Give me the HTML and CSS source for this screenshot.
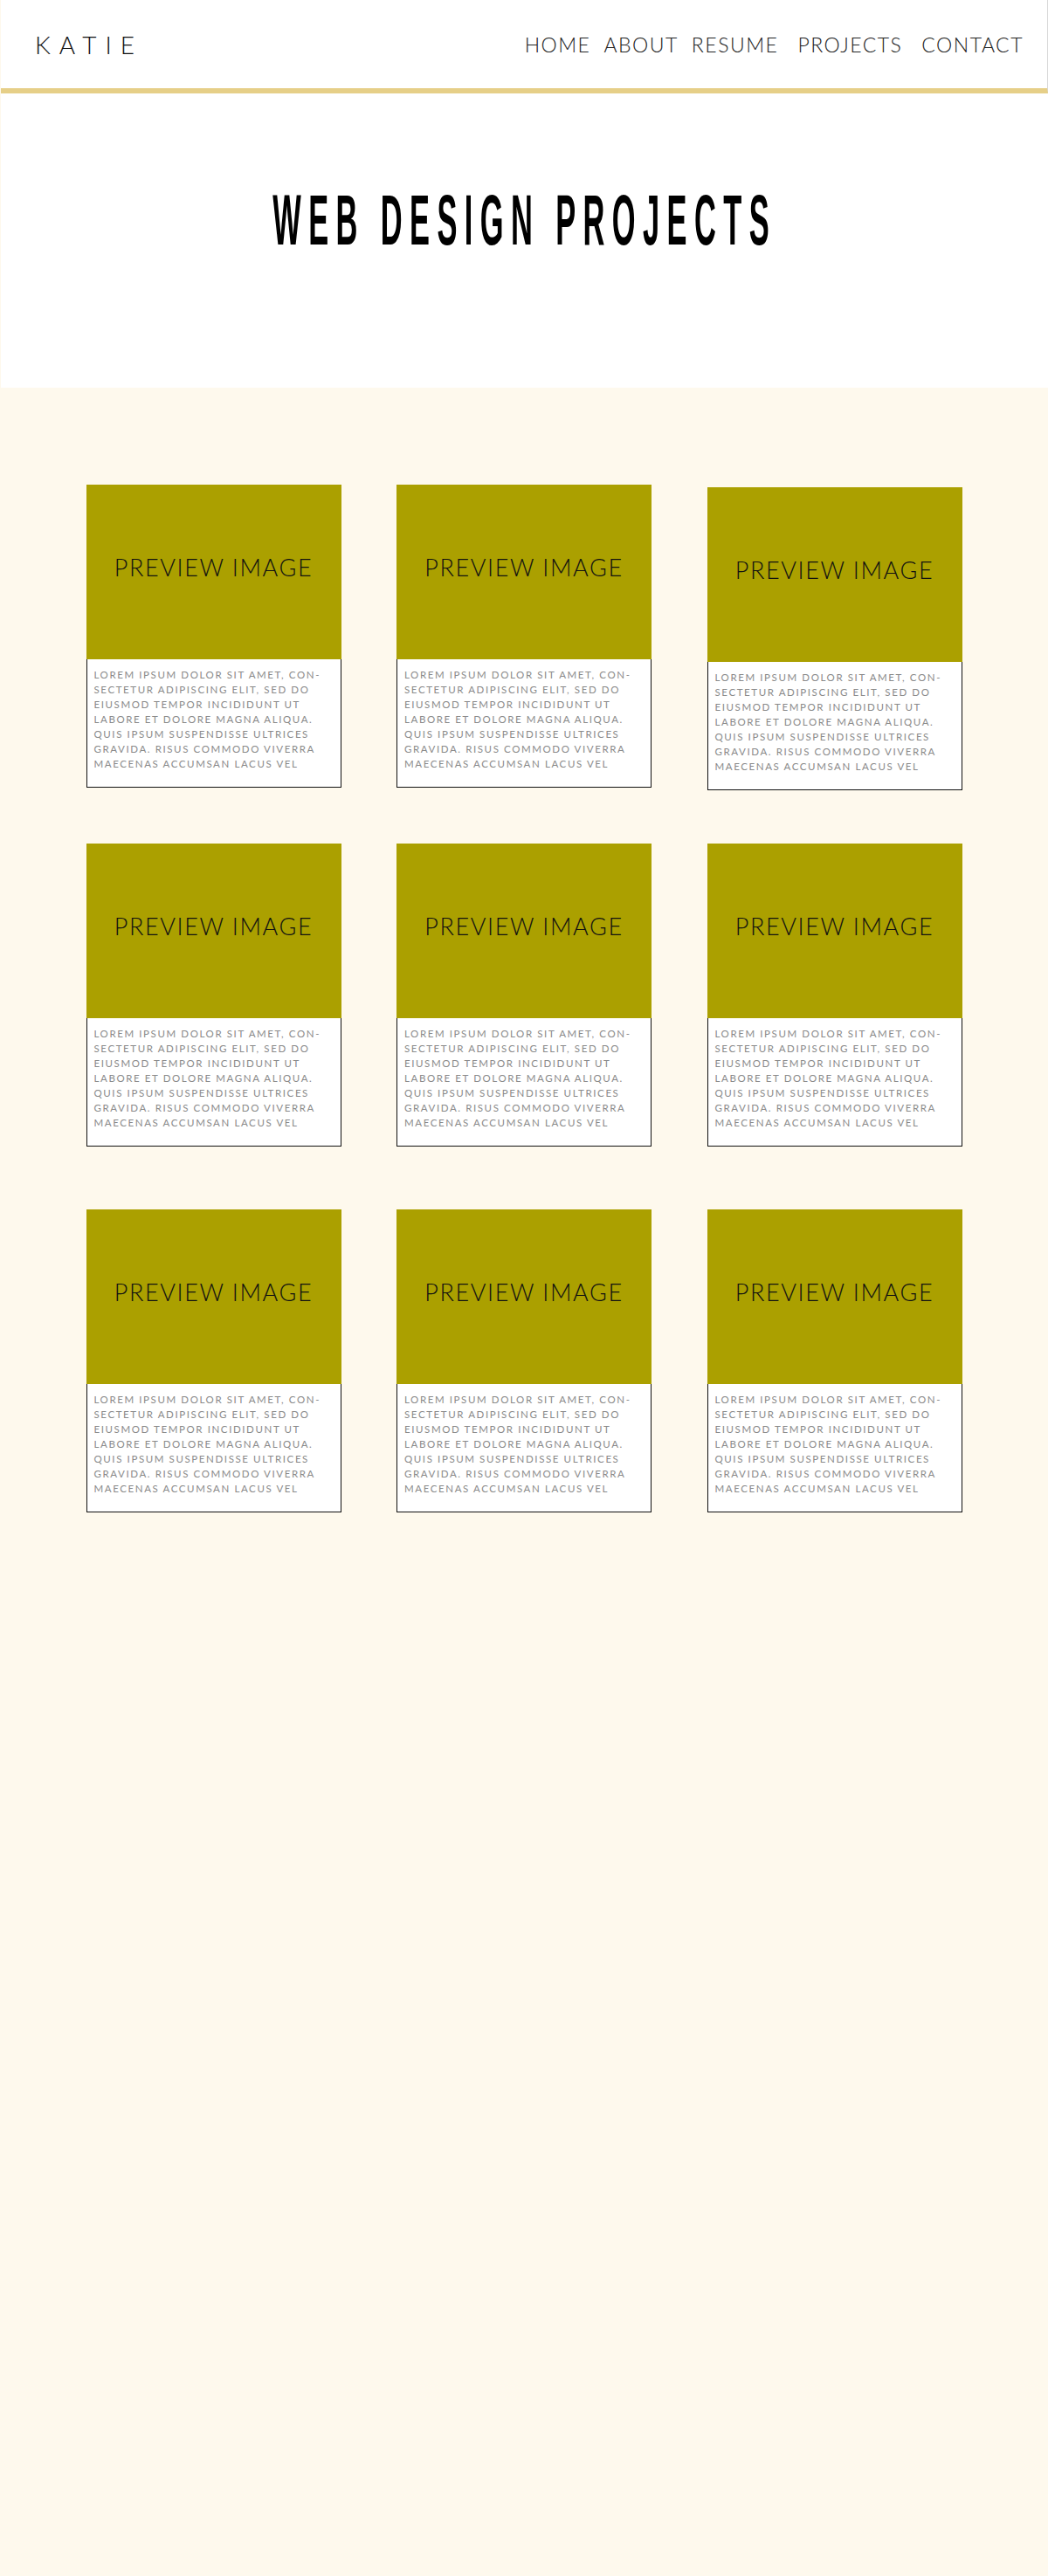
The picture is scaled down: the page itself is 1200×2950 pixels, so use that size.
FILE: index.html
```html
<!DOCTYPE html>
<html lang="en">
<head>
<meta charset="utf-8">
<title>Katie - Web Design Projects</title>
<link rel="stylesheet" href="styles.css">
</head>
<body>
<header class="site-header">
  <div class="brand">KATIE</div>
  <nav class="nav">
    <a class="nav-link" href="#">HOME</a>
    <a class="nav-link" href="#">ABOUT</a>
    <a class="nav-link" href="#">RESUME</a>
    <a class="nav-link nav-wide" href="#">PROJECTS</a>
    <a class="nav-link nav-wide" href="#">CONTACT</a>
  </nav>
</header>
<section class="hero">
  <h1 class="hero-title">WEB DESIGN PROJECTS</h1>
</section>
<main class="projects">
  <div class="grid">
    <article class="card">
      <div class="preview">PREVIEW IMAGE</div>
      <p class="desc">LOREM IPSUM DOLOR SIT AMET, CON-<br>SECTETUR ADIPISCING ELIT, SED DO<br>EIUSMOD TEMPOR INCIDIDUNT UT<br>LABORE ET DOLORE MAGNA ALIQUA.<br>QUIS IPSUM SUSPENDISSE ULTRICES<br>GRAVIDA. RISUS COMMODO VIVERRA<br>MAECENAS ACCUMSAN LACUS VEL</p>
    </article>
    <article class="card">
      <div class="preview">PREVIEW IMAGE</div>
      <p class="desc">LOREM IPSUM DOLOR SIT AMET, CON-<br>SECTETUR ADIPISCING ELIT, SED DO<br>EIUSMOD TEMPOR INCIDIDUNT UT<br>LABORE ET DOLORE MAGNA ALIQUA.<br>QUIS IPSUM SUSPENDISSE ULTRICES<br>GRAVIDA. RISUS COMMODO VIVERRA<br>MAECENAS ACCUMSAN LACUS VEL</p>
    </article>
    <article class="card card-low">
      <div class="preview">PREVIEW IMAGE</div>
      <p class="desc">LOREM IPSUM DOLOR SIT AMET, CON-<br>SECTETUR ADIPISCING ELIT, SED DO<br>EIUSMOD TEMPOR INCIDIDUNT UT<br>LABORE ET DOLORE MAGNA ALIQUA.<br>QUIS IPSUM SUSPENDISSE ULTRICES<br>GRAVIDA. RISUS COMMODO VIVERRA<br>MAECENAS ACCUMSAN LACUS VEL</p>
    </article>
    <article class="card">
      <div class="preview">PREVIEW IMAGE</div>
      <p class="desc">LOREM IPSUM DOLOR SIT AMET, CON-<br>SECTETUR ADIPISCING ELIT, SED DO<br>EIUSMOD TEMPOR INCIDIDUNT UT<br>LABORE ET DOLORE MAGNA ALIQUA.<br>QUIS IPSUM SUSPENDISSE ULTRICES<br>GRAVIDA. RISUS COMMODO VIVERRA<br>MAECENAS ACCUMSAN LACUS VEL</p>
    </article>
    <article class="card">
      <div class="preview">PREVIEW IMAGE</div>
      <p class="desc">LOREM IPSUM DOLOR SIT AMET, CON-<br>SECTETUR ADIPISCING ELIT, SED DO<br>EIUSMOD TEMPOR INCIDIDUNT UT<br>LABORE ET DOLORE MAGNA ALIQUA.<br>QUIS IPSUM SUSPENDISSE ULTRICES<br>GRAVIDA. RISUS COMMODO VIVERRA<br>MAECENAS ACCUMSAN LACUS VEL</p>
    </article>
    <article class="card">
      <div class="preview">PREVIEW IMAGE</div>
      <p class="desc">LOREM IPSUM DOLOR SIT AMET, CON-<br>SECTETUR ADIPISCING ELIT, SED DO<br>EIUSMOD TEMPOR INCIDIDUNT UT<br>LABORE ET DOLORE MAGNA ALIQUA.<br>QUIS IPSUM SUSPENDISSE ULTRICES<br>GRAVIDA. RISUS COMMODO VIVERRA<br>MAECENAS ACCUMSAN LACUS VEL</p>
    </article>
    <article class="card card-last-row">
      <div class="preview">PREVIEW IMAGE</div>
      <p class="desc">LOREM IPSUM DOLOR SIT AMET, CON-<br>SECTETUR ADIPISCING ELIT, SED DO<br>EIUSMOD TEMPOR INCIDIDUNT UT<br>LABORE ET DOLORE MAGNA ALIQUA.<br>QUIS IPSUM SUSPENDISSE ULTRICES<br>GRAVIDA. RISUS COMMODO VIVERRA<br>MAECENAS ACCUMSAN LACUS VEL</p>
    </article>
    <article class="card card-last-row">
      <div class="preview">PREVIEW IMAGE</div>
      <p class="desc">LOREM IPSUM DOLOR SIT AMET, CON-<br>SECTETUR ADIPISCING ELIT, SED DO<br>EIUSMOD TEMPOR INCIDIDUNT UT<br>LABORE ET DOLORE MAGNA ALIQUA.<br>QUIS IPSUM SUSPENDISSE ULTRICES<br>GRAVIDA. RISUS COMMODO VIVERRA<br>MAECENAS ACCUMSAN LACUS VEL</p>
    </article>
    <article class="card card-last-row">
      <div class="preview">PREVIEW IMAGE</div>
      <p class="desc">LOREM IPSUM DOLOR SIT AMET, CON-<br>SECTETUR ADIPISCING ELIT, SED DO<br>EIUSMOD TEMPOR INCIDIDUNT UT<br>LABORE ET DOLORE MAGNA ALIQUA.<br>QUIS IPSUM SUSPENDISSE ULTRICES<br>GRAVIDA. RISUS COMMODO VIVERRA<br>MAECENAS ACCUMSAN LACUS VEL</p>
    </article>
  </div>
</main>
</body>
</html>
```

FILE: styles.css
```css
* {
  box-sizing: border-box;
}

html, body {
  margin: 0;
  padding: 0;
}

body {
  background: #fef9ed;
  font-family: "Lato", "Noto Sans", sans-serif;
  font-weight: 300;
  color: #111;
  min-height: 2950px;
}

.site-header {
  height: 107px;
  margin-left: 1px;
  background: #fff;
  border-bottom: 6px solid #e6cf88;
  border-right: 1px solid #d8d8d8;
  display: flex;
  align-items: center;
  justify-content: space-between;
  padding: 0 27px 0 39px;
}

.brand {
  font-size: 28px;
  letter-spacing: 10px;
  font-weight: 300;
  color: #111;
}

.nav {
  display: flex;
  align-items: center;
  gap: 15px;
}

.nav-link {
  font-size: 23px;
  letter-spacing: 1.5px;
  color: #222;
  text-decoration: none;
  font-weight: 300;
}

.nav-wide {
  margin-left: 7px;
}

.hero {
  margin-left: 1px;
  background: #fff;
  height: 337px;
  display: flex;
  justify-content: center;
  padding-top: 97px;
}

.hero-title {
  margin: 0;
  font-family: "Liberation Sans", "Noto Sans", sans-serif;
  font-weight: 700;
  font-size: 82px;
  line-height: 96px;
  height: 96px;
  letter-spacing: 20px;
  color: #000;
  white-space: nowrap;
  transform: scaleX(0.42);
  transform-origin: center;
}

.projects {
  padding: 111px 0 0;
}

.grid {
  width: 1003px;
  margin: 0 auto;
  display: grid;
  grid-template-columns: repeat(3, 292px);
  column-gap: 63.5px;
  row-gap: 64px;
  align-items: start;
}

.card {
  background: #fff;
  border: 1px solid #111;
  border-top: none;
}

.card-low {
  margin-top: 3px;
  margin-bottom: -3px;
}

.card-last-row {
  margin-top: 8px;
}

.preview {
  background: #aba000;
  height: 200px;
  margin: 0 -1px;
  display: flex;
  align-items: center;
  justify-content: center;
  font-size: 27px;
  letter-spacing: 1.6px;
  color: #111;
  padding-bottom: 12px;
}

.desc {
  margin: 0;
  padding: 9px 4px 18px 8px;
  font-size: 11.5px;
  line-height: 17px;
  letter-spacing: 1.6px;
  color: #8a8a8a;
  font-weight: 400;
  white-space: nowrap;
}
```
